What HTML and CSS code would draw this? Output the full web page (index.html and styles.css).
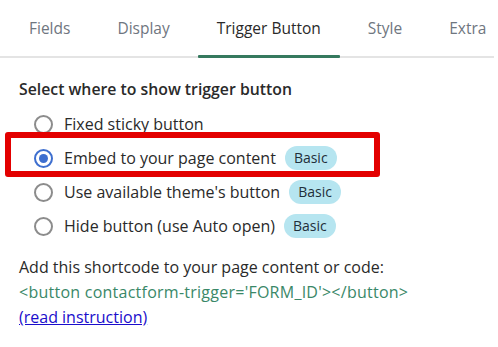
FILE: index.html
```html
<!DOCTYPE html>
<html lang="en">
<head>
    <meta charset="UTF-8">
    <meta name="viewport" content="width=device-width, initial-scale=1.0">
    <title>Trigger Button</title>
    <link rel="stylesheet" href="styles.css">
</head>
<body>
    <div class="panel">
        <nav class="tabs">
            <a class="tab">Fields</a>
            <a class="tab">Display</a>
            <a class="tab active">Trigger Button</a>
            <a class="tab">Style</a>
            <a class="tab">Extra</a>
        </nav>

        <div class="content">
            <div class="heading">Select where to show trigger button</div>

            <div class="options">
                <label class="option">
                    <span class="radio"></span>
                    <span class="label">Fixed sticky button</span>
                </label>
                <label class="option selected highlight">
                    <span class="radio checked"></span>
                    <span class="label">Embed to your page content</span>
                    <span class="badge">Basic</span>
                </label>
                <label class="option">
                    <span class="radio"></span>
                    <span class="label">Use available theme's button</span>
                    <span class="badge">Basic</span>
                </label>
                <label class="option">
                    <span class="radio"></span>
                    <span class="label">Hide button (use Auto open)</span>
                    <span class="badge">Basic</span>
                </label>
            </div>

            <div class="note">
                <div>Add this shortcode to your page content or code:</div>
                <div class="code">&lt;button contactform-trigger='FORM_ID'&gt;&lt;/button&gt;</div>
                <a class="link" href="#">(read instruction)</a>
            </div>
        </div>
    </div>
</body>
</html>
```

FILE: styles.css
```css
body, html {
    margin: 0;
    background: #fff;
}

body {
    font-family: "Open Sans", "Noto Sans", sans-serif;
    color: #2a2a2a;
    font-size: 16px;
}

.panel {
    margin-right: 4px;
}

.tabs {
    display: flex;
    gap: 9px;
    padding-left: 10px;
    height: 56px;
    border-bottom: 2px solid #e4e4e4;
}

.tab {
    flex: none;
    padding: 0 19px;
    line-height: 56px;
    color: #6f7680;
    font-size: 15.5px;
    white-space: nowrap;
    position: relative;
}

.tab:last-child {
    padding-right: 0;
}

.tab.active {
    color: #2a2a2a;
}

.tab.active:after {
    content: '';
    position: absolute;
    left: 0;
    right: 0;
    bottom: -2px;
    height: 3px;
    background: #35795e;
    border-radius: 1px;
}

.content {
    padding: 20px 0 0 19px;
}

.heading {
    font-weight: 600;
    font-size: 15.8px;
    line-height: 22px;
}

.options {
    display: flex;
    flex-direction: column;
    margin-top: 7px;
}

.option {
    display: flex;
    align-items: center;
    height: 34px;
    padding-left: 15px;
    gap: 11px;
    position: relative;
}

.highlight:before {
    content: '';
    position: absolute;
    left: -14px;
    top: -9px;
    width: 363px;
    height: 33px;
    border: 6px solid #e30000;
    border-radius: 3px;
}

.radio {
    width: 15px;
    height: 15px;
    border: 2px solid #8c8c8c;
    border-radius: 50%;
    flex: none;
    display: flex;
    align-items: center;
    justify-content: center;
}

.radio.checked {
    border-color: #3e6fcf;
}

.radio.checked:after {
    content: '';
    width: 9px;
    height: 9px;
    border-radius: 50%;
    background: #3e6fcf;
}

.label {
    white-space: nowrap;
}

.badge {
    margin-left: -2px;
    background: #b6e5f0;
    color: #1f2f3a;
    font-size: 14px;
    padding: 0 9px;
    height: 24px;
    line-height: 24px;
    border-radius: 12px;
}

.note {
    margin-top: 12px;
    line-height: 25px;
}

.code {
    color: #3a8868;
    white-space: nowrap;
    letter-spacing: 0.25px;
}

.link {
    color: #1a0dcc;
}
```
